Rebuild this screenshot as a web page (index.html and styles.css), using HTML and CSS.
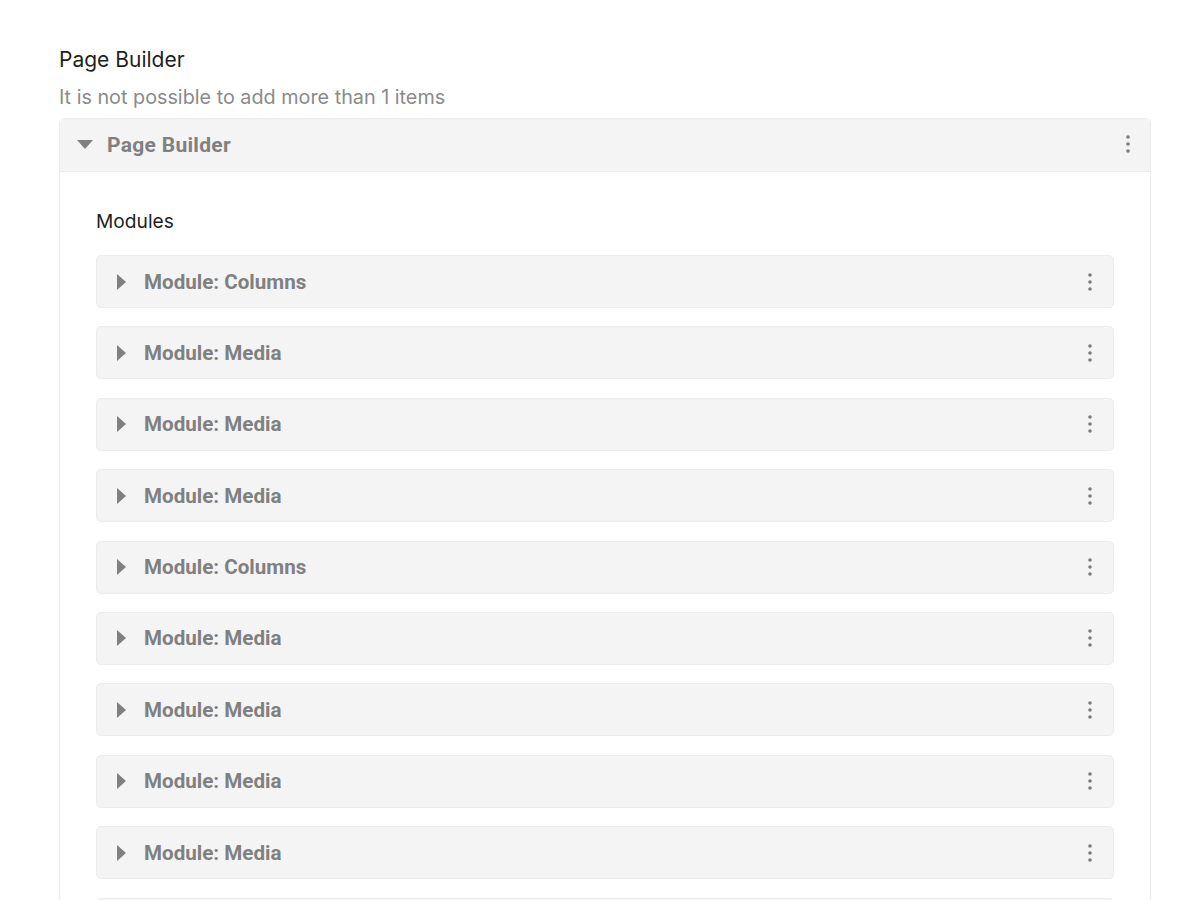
FILE: index.html
```html
<!DOCTYPE html>
<html lang="en">
<head>
  <meta charset="UTF-8">
  <title>Page Builder</title>
  <link rel="stylesheet" href="styles.css">
</head>
<body>

<div class="field">
  <div class="field-label">Page Builder</div>
  <div class="field-hint">It is not possible to add more than 1 items</div>

  <div class="group">
    <div class="group-head">
      <svg class="caret" width="16" height="10" viewBox="0 0 16 10"><path d="M0 0 L16 0 L8 9 Z"/></svg>
      <span class="group-title">Page Builder</span>
      <svg class="dots" width="4" height="18" viewBox="0 0 4 18"><circle cx="2" cy="2" r="1.8"/><circle cx="2" cy="9" r="1.8"/><circle cx="2" cy="16" r="1.8"/></svg>
    </div>

    <div class="group-body">
      <div class="sub-label">Modules</div>

      <div class="module-list">
        <div class="module">
          <svg class="caret-right" width="9" height="16" viewBox="0 0 9 16"><path d="M0 0 L9 8 L0 16 Z"/></svg>
          <span class="module-title">Module: Columns</span>
          <svg class="dots" width="4" height="18" viewBox="0 0 4 18"><circle cx="2" cy="2" r="1.8"/><circle cx="2" cy="9" r="1.8"/><circle cx="2" cy="16" r="1.8"/></svg>
        </div>
        <div class="module">
          <svg class="caret-right" width="9" height="16" viewBox="0 0 9 16"><path d="M0 0 L9 8 L0 16 Z"/></svg>
          <span class="module-title">Module: Media</span>
          <svg class="dots" width="4" height="18" viewBox="0 0 4 18"><circle cx="2" cy="2" r="1.8"/><circle cx="2" cy="9" r="1.8"/><circle cx="2" cy="16" r="1.8"/></svg>
        </div>
        <div class="module">
          <svg class="caret-right" width="9" height="16" viewBox="0 0 9 16"><path d="M0 0 L9 8 L0 16 Z"/></svg>
          <span class="module-title">Module: Media</span>
          <svg class="dots" width="4" height="18" viewBox="0 0 4 18"><circle cx="2" cy="2" r="1.8"/><circle cx="2" cy="9" r="1.8"/><circle cx="2" cy="16" r="1.8"/></svg>
        </div>
        <div class="module">
          <svg class="caret-right" width="9" height="16" viewBox="0 0 9 16"><path d="M0 0 L9 8 L0 16 Z"/></svg>
          <span class="module-title">Module: Media</span>
          <svg class="dots" width="4" height="18" viewBox="0 0 4 18"><circle cx="2" cy="2" r="1.8"/><circle cx="2" cy="9" r="1.8"/><circle cx="2" cy="16" r="1.8"/></svg>
        </div>
        <div class="module">
          <svg class="caret-right" width="9" height="16" viewBox="0 0 9 16"><path d="M0 0 L9 8 L0 16 Z"/></svg>
          <span class="module-title">Module: Columns</span>
          <svg class="dots" width="4" height="18" viewBox="0 0 4 18"><circle cx="2" cy="2" r="1.8"/><circle cx="2" cy="9" r="1.8"/><circle cx="2" cy="16" r="1.8"/></svg>
        </div>
        <div class="module">
          <svg class="caret-right" width="9" height="16" viewBox="0 0 9 16"><path d="M0 0 L9 8 L0 16 Z"/></svg>
          <span class="module-title">Module: Media</span>
          <svg class="dots" width="4" height="18" viewBox="0 0 4 18"><circle cx="2" cy="2" r="1.8"/><circle cx="2" cy="9" r="1.8"/><circle cx="2" cy="16" r="1.8"/></svg>
        </div>
        <div class="module">
          <svg class="caret-right" width="9" height="16" viewBox="0 0 9 16"><path d="M0 0 L9 8 L0 16 Z"/></svg>
          <span class="module-title">Module: Media</span>
          <svg class="dots" width="4" height="18" viewBox="0 0 4 18"><circle cx="2" cy="2" r="1.8"/><circle cx="2" cy="9" r="1.8"/><circle cx="2" cy="16" r="1.8"/></svg>
        </div>
        <div class="module">
          <svg class="caret-right" width="9" height="16" viewBox="0 0 9 16"><path d="M0 0 L9 8 L0 16 Z"/></svg>
          <span class="module-title">Module: Media</span>
          <svg class="dots" width="4" height="18" viewBox="0 0 4 18"><circle cx="2" cy="2" r="1.8"/><circle cx="2" cy="9" r="1.8"/><circle cx="2" cy="16" r="1.8"/></svg>
        </div>
        <div class="module">
          <svg class="caret-right" width="9" height="16" viewBox="0 0 9 16"><path d="M0 0 L9 8 L0 16 Z"/></svg>
          <span class="module-title">Module: Media</span>
          <svg class="dots" width="4" height="18" viewBox="0 0 4 18"><circle cx="2" cy="2" r="1.8"/><circle cx="2" cy="9" r="1.8"/><circle cx="2" cy="16" r="1.8"/></svg>
        </div>
        <div class="module module-cut"></div>
      </div>
    </div>
  </div>
</div>

</body>
</html>
```

FILE: styles.css
```css
body {
  font-family: Inter, "Noto Sans", sans-serif;
  background-color: #fff;
  color: #1f1f1f;
  margin: 0;
  padding: 46px 49px 0 59px;
  height: 900px;
  overflow: hidden;
  box-sizing: border-box;
}
.field-label {
  font-size: 21px;
  line-height: 28px;
  color: #1f1f1f;
}
.field-hint {
  font-size: 19.8px;
  line-height: 28px;
  margin-top: 9px;
  color: #8a8a8a;
}
.group {
  margin-top: 7px;
  border: 1px solid #ececec;
  border-radius: 5px;
}
.group-head {
  display: flex;
  align-items: center;
  height: 52px;
  padding: 0 20px 0 17px;
  background-color: #f4f4f4;
  border-bottom: 1px solid #ebebeb;
  border-radius: 5px 5px 0 0;
}
.caret {
  fill: #808080;
  margin-right: 14px;
}
.group-title,
.module-title {
  font-family: Roboto, "Liberation Sans", sans-serif;
  font-weight: bold;
  font-size: 20.6px;
  color: #808080;
  flex: 1;
}
.group-title {
  font-size: 21px;
  letter-spacing: 0.3px;
}
.dots {
  fill: #7c7c7c;
  margin-top: -2px;
}
.group-body {
  padding: 36px 36px 0 36px;
}
.sub-label {
  font-size: 19.2px;
  line-height: 26px;
  color: #1f1f1f;
  margin-bottom: 21px;
}
.module-list {
  display: flex;
  flex-direction: column;
  gap: 18.4px;
}
.module {
  display: flex;
  align-items: center;
  box-sizing: border-box;
  height: 53px;
  padding: 0 21px 0 20px;
  background-color: #f4f4f4;
  border: 1px solid #ececec;
  border-radius: 5px;
}
.module .dots {
  margin-top: 0;
}
.caret-right {
  fill: #808080;
  margin-right: 18px;
}
```
